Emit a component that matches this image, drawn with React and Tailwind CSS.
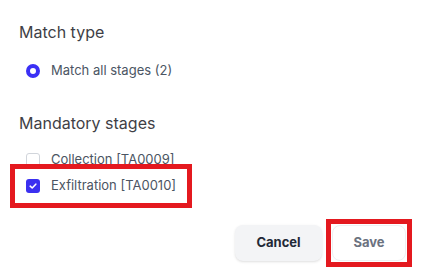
import React from "react";

function Check() {
  return (
    <svg width="10" height="10" viewBox="0 0 10 10" fill="none">
      <path d="M2.2 5.2 L4.2 7 L7.8 3.2" stroke="white" strokeWidth="1.6" strokeLinecap="round" strokeLinejoin="round" />
    </svg>
  );
}

export default function App() {
  return (
    <div className="w-[425px] h-[277px] bg-white pt-[22px] overflow-hidden" style={{ fontFamily: "Inter, 'Noto Sans', sans-serif" }}>
      <div className="ml-[19px] text-[16px] leading-[20px] text-[#3f3f46]">Match type</div>
      <div className="mt-[19px] ml-[26px] flex items-center h-[20px] gap-[11px]">
        <span className="w-[14px] h-[14px] rounded-full border-[4.5px] border-[#3b30f5] bg-white box-border" />
        <span className="text-[13px] text-[#4b5563]">Match all stages (2)</span>
      </div>
      <div className="mt-[32px] ml-[19px] text-[16px] leading-[20px] text-[#3f3f46]">Mandatory stages</div>
      <div className="mt-[17px] ml-[26px] flex items-center h-[20px] gap-[11px]">
        <span className="w-[14px] h-[14px] rounded-[3px] border border-[#d1d5db] bg-white box-border" />
        <span className="text-[13px] text-[#4b5563]">Collection [TA0009]</span>
      </div>
      <div className="mt-[-6px] ml-[10px] w-[182px] border-[5px] border-[#e4191f] py-[7px] pl-[11px] flex items-center h-[44px] gap-[11px] box-border relative">
        <span className="w-[14px] h-[14px] rounded-[3px] bg-[#3b30f0] flex items-center justify-center">
          <Check />
        </span>
        <span className="text-[13px] text-[#4b5563]">Exfiltration [TA0010]</span>
      </div>
      <div className="mt-[11px] pr-[13px] flex justify-end items-center gap-[4px]">
        <button className="w-[87px] h-[36px] rounded-lg bg-[#f3f4f6] shadow-sm text-[13px] font-bold text-[#1f2937]">Cancel</button>
        <div className="border-[5px] border-[#e4191f] p-[1px]">
          <button className="w-[74px] h-[36px] rounded-lg bg-white border border-[#eef0f2] text-[13px] font-bold text-[#6b7280]">Save</button>
        </div>
      </div>
    </div>
  );
}
